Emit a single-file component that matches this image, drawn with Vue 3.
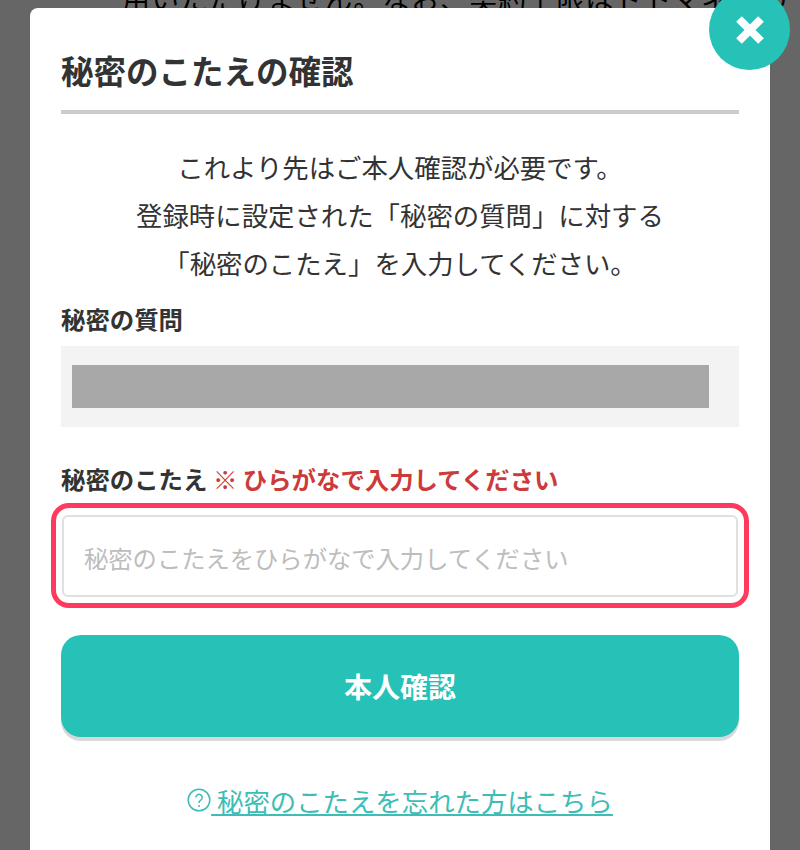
<template>
  <div class="page">
    <p class="behind">用いただけません。なお、契約上限はドトマネーの</p>
    <div class="overlay"></div>
    <div class="modal">
      <button class="close" type="button" aria-label="閉じる">
        <svg width="32" height="32" viewBox="0 0 32 32"><path d="M5 5 L27 27 M27 5 L5 27" stroke="#fff" stroke-width="8" fill="none"/></svg>
      </button>
      <h1 class="title">秘密のこたえの確認</h1>
      <p class="lead">
        これより先はご本人確認が必要です。<br />
        登録時に設定された「秘密の質問」に対する<br />
        「秘密のこたえ」を入力してください。
      </p>
      <div class="label">秘密の質問</div>
      <div class="question"><div class="mask"></div></div>
      <div class="label answer-label">秘密のこたえ <span class="note">※ ひらがなで入力してください</span></div>
      <div class="highlight">
        <input class="answer" type="text" placeholder="秘密のこたえをひらがなで入力してください" />
      </div>
      <button class="submit" type="button">本人確認</button>
      <div class="forgot">
        <svg class="help" width="24" height="24" viewBox="0 0 24 24" fill="none" stroke="#3dbdb5">
          <circle cx="12" cy="12" r="10.8" stroke-width="1.5" />
          <path d="M8.8 9.6a3.2 3.2 0 1 1 5 2.6c-1.2.8-1.8 1.4-1.8 2.8" stroke-width="1.5" />
          <circle cx="12" cy="18" r="1" fill="#3dbdb5" stroke="none" />
        </svg>
        <a class="link" href="#"> 秘密のこたえを忘れた方はこちら</a>
      </div>
    </div>
  </div>
</template>

<script setup>
</script>

<style>
html, body {
  margin: 0;
  height: 100%;
  overflow: hidden;
}
</style>

<style scoped>
.page {
  position: relative;
  width: 800px;
  height: 850px;
  overflow: hidden;
  background: #fff;
  font-family: "Noto Sans CJK JP", "Noto Sans", sans-serif;
  color: #333;
}
.behind {
  position: absolute;
  top: -22px;
  left: 122px;
  margin: 0;
  font-size: 28px;
  letter-spacing: 1px;
  white-space: nowrap;
  color: #000;
}
.overlay {
  position: absolute;
  inset: 0;
  background: rgba(0, 0, 0, 0.6);
}
.modal {
  position: relative;
  box-sizing: border-box;
  width: 740px;
  height: 900px;
  margin: 8px 0 0 30px;
  padding: 0 31px;
  background: #fff;
  border-radius: 8px;
}
.close {
  position: absolute;
  top: -19px;
  right: -20px;
  width: 81px;
  height: 81px;
  padding: 0;
  border: 0;
  border-radius: 50%;
  background: #26c1b7;
  display: flex;
  align-items: center;
  justify-content: center;
}
.title {
  margin: 0;
  padding: 37px 0 15px;
  height: 50px;
  line-height: 50px;
  box-sizing: content-box;
  font-size: 32.5px;
  font-weight: 700;
  border-bottom: 4px solid #ccc;
}
.lead {
  margin: 29px 0 0;
  text-align: center;
  font-size: 26.4px;
  line-height: 48px;
}
.label {
  margin-top: 8px;
  height: 48px;
  line-height: 48px;
  font-size: 24.4px;
  font-weight: 700;
}
.question {
  box-sizing: border-box;
  height: 81px;
  margin-top: 3px;
  padding: 19px 30px 19px 11px;
  background: #f3f3f3;
}
.mask {
  height: 43px;
  background: #a8a8a8;
}
.answer-label {
  margin-top: 28px;
}
.note {
  color: #cc3a3a;
}
.highlight {
  box-sizing: border-box;
  height: 105px;
  margin: 0 -10px;
  padding: 7px 6px 6px;
  border: 5px solid #ff3a5e;
  border-radius: 18px;
}
.answer {
  display: block;
  box-sizing: border-box;
  width: 100%;
  height: 100%;
  padding: 3px 20px 0;
  border: 2px solid #e0e0e0;
  border-radius: 6px;
  outline: none;
  font-family: inherit;
  font-size: 24.3px;
  color: #333;
}
.answer::placeholder {
  color: #bdbdbd;
  opacity: 1;
}
.submit {
  display: block;
  width: 100%;
  height: 102px;
  margin-top: 27px;
  border: 0;
  border-radius: 20px;
  background: #26c1b7;
  box-shadow: 0 4px 0 #d9d9d9;
  color: #fff;
  font-family: inherit;
  font-size: 28px;
  font-weight: 700;
}
.forgot {
  display: flex;
  align-items: center;
  justify-content: center;
  margin-top: 43px;
  height: 40px;
}
.help {
  flex: none;
}
.link {
  color: #3dbdb5;
  font-size: 26.4px;
  white-space: pre;
  text-decoration: underline;
}
</style>
